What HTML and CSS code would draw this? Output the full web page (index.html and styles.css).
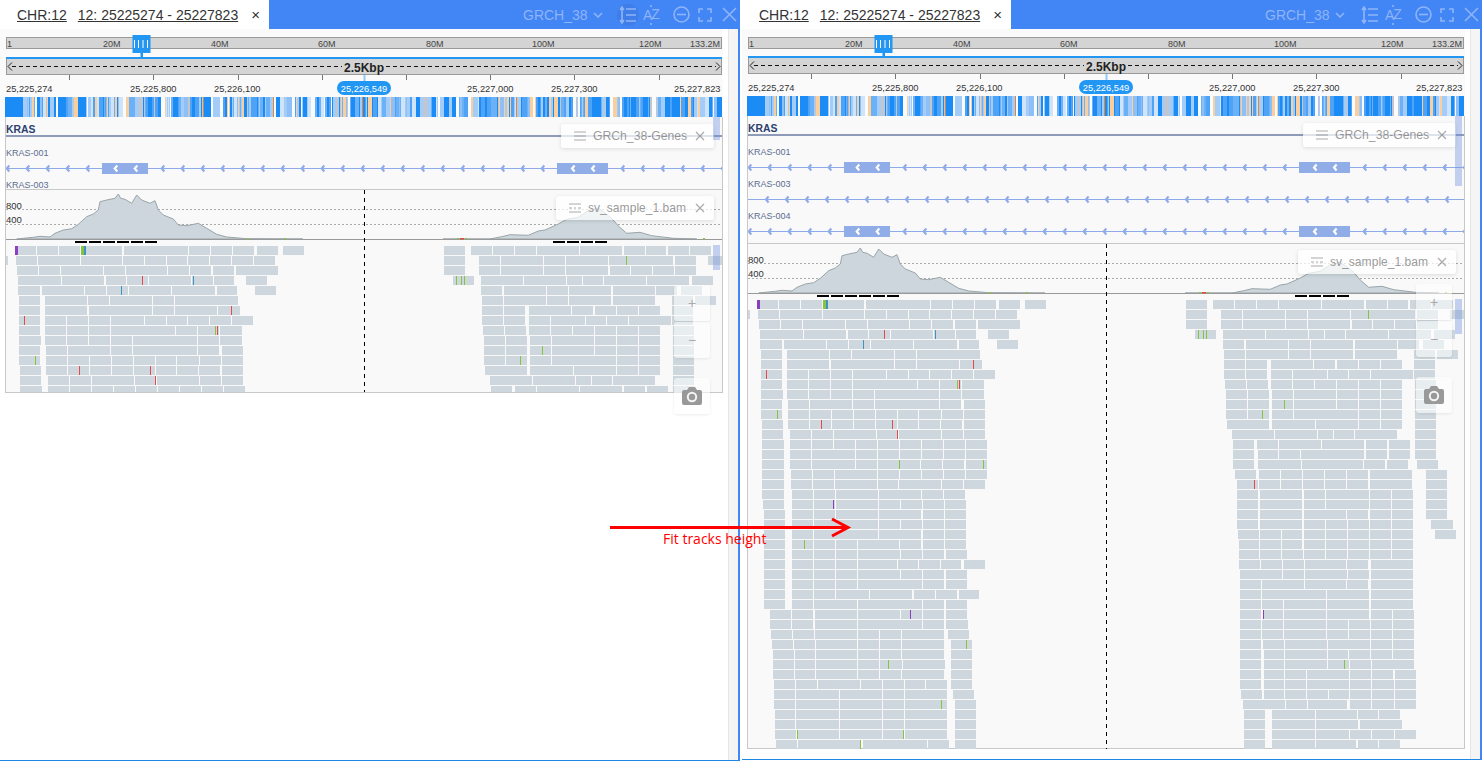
FILE: index.html
```html
<!DOCTYPE html>
<html lang="en">
<head>
    <meta charset="UTF-8">
    <title>Fit tracks height</title>
    <link rel="stylesheet" href="styles.css">
</head>
<body>
    <!-- browser before the track heights are fitted -->
    <div class="panel" id="panelBefore">
        <div class="header">
            <div class="tab">
                <a class="tab-link">CHR:12</a>
                <a class="tab-link">12: 25225274 - 25227823</a>
                <span class="tab-close">×</span>
            </div>
            <div class="tools">
                <span class="ref-name">GRCH_38</span>
                <svg class="tool-chevron" width="10" height="6"><path d="M1 1l4 4 4-4" /></svg>
                <span class="tool-round">
                    <svg width="18" height="18"><path d="M3 1v16M1 4l2-3 2 3M1 14l2 3 2-3M7 3h10M7 9h10M7 15h10" /></svg>
                </span>
                <span class="tool-az">A<i>Z</i><svg width="4" height="22"><path d="M2 1v2M2 19v2" /></svg></span>
                <svg class="tool-minus" width="17" height="17"><circle cx="8.5" cy="8.5" r="7.5" /><path d="M4 8.5h9" /></svg>
                <svg class="tool-full" width="14" height="14"><path d="M1 5V1h4M9 1h4v4M13 9v4H9M5 13H1V9" /></svg>
                <svg class="tool-x" width="15" height="15"><path d="M1 1l13 13M14 1L1 14" /></svg>
            </div>
        </div>
        <div class="main">
            <div class="view">
                <div class="top-area">
                    <svg class="ideogram"></svg>
                    <svg class="scale"></svg>
                    <svg class="seq"></svg>
                </div>
                <div class="tracks">
                    <svg class="genes"></svg>
                    <svg class="bam"></svg>
                </div>

                <div class="legend legend-genes">
                    <svg class="legend-icon" width="12" height="10"><path d="M0 1h12M0 5h12M0 9h12" /></svg>
                    <span>GRCh_38-Genes</span>
                    <svg class="legend-x" width="10" height="10"><path d="M1 1l8 8M9 1L1 9" /></svg>
                </div>
                <div class="legend legend-bam">
                    <svg class="legend-icon" width="12" height="10"><path d="M0 1h12M0 5h3M5 5h2M9 5h3M0 9h12" /></svg>
                    <span>sv_sample_1.bam</span>
                    <svg class="legend-x" width="10" height="10"><path d="M1 1l8 8M9 1L1 9" /></svg>
                </div>
                <div class="strip strip-genes"></div>
                <div class="strip strip-bam"></div>
                <div class="zoom-tools">
                    <div class="zoom-btn">+</div>
                    <div class="zoom-btn">−</div>
                    <div class="zoom-btn zoom-camera">
                        <svg width="20" height="18"><path d="M0 5q0-2 2-2h3l2-3h6l2 3h3q2 0 2 2v11q0 2-2 2H2q-2 0-2-2z" /><circle cx="10" cy="10" r="4.2" /></svg>
                    </div>
                </div>
            </div>
            <div class="scrollbar"></div>
        </div>
    </div>

    <!-- same browser after the click, all reads visible -->
    <div class="panel panel-fit" id="panelAfter">
        <div class="header">
            <div class="tab">
                <a class="tab-link">CHR:12</a>
                <a class="tab-link">12: 25225274 - 25227823</a>
                <span class="tab-close">×</span>
            </div>
            <div class="tools">
                <span class="ref-name">GRCH_38</span>
                <svg class="tool-chevron" width="10" height="6"><path d="M1 1l4 4 4-4" /></svg>
                <span class="tool-round tool-plain">
                    <svg width="18" height="18"><path d="M3 1v16M1 4l2-3 2 3M1 14l2 3 2-3M7 3h10M7 9h10M7 15h10" /></svg>
                </span>
                <span class="tool-az">A<i>Z</i><svg width="4" height="22"><path d="M2 1v2M2 19v2" /></svg></span>
                <svg class="tool-minus" width="17" height="17"><circle cx="8.5" cy="8.5" r="7.5" /><path d="M4 8.5h9" /></svg>
                <svg class="tool-full" width="14" height="14"><path d="M1 5V1h4M9 1h4v4M13 9v4H9M5 13H1V9" /></svg>
                <svg class="tool-x" width="15" height="15"><path d="M1 1l13 13M14 1L1 14" /></svg>
            </div>
        </div>
        <div class="main">
            <div class="view">
                <div class="top-area">
                    <svg class="ideogram"></svg>
                    <svg class="scale"></svg>
                    <svg class="seq"></svg>
                </div>
                <div class="tracks">
                    <svg class="genes"></svg>
                    <svg class="bam"></svg>
                </div>

                <div class="legend legend-genes">
                    <svg class="legend-icon" width="12" height="10"><path d="M0 1h12M0 5h12M0 9h12" /></svg>
                    <span>GRCh_38-Genes</span>
                    <svg class="legend-x" width="10" height="10"><path d="M1 1l8 8M9 1L1 9" /></svg>
                </div>
                <div class="legend legend-bam">
                    <svg class="legend-icon" width="12" height="10"><path d="M0 1h12M0 5h3M5 5h2M9 5h3M0 9h12" /></svg>
                    <span>sv_sample_1.bam</span>
                    <svg class="legend-x" width="10" height="10"><path d="M1 1l8 8M9 1L1 9" /></svg>
                </div>
                <div class="strip strip-genes"></div>
                <div class="strip strip-bam"></div>
                <div class="zoom-tools">
                    <div class="zoom-btn">+</div>
                    <div class="zoom-btn">−</div>
                    <div class="zoom-btn zoom-camera">
                        <svg width="20" height="18"><path d="M0 5q0-2 2-2h3l2-3h6l2 3h3q2 0 2 2v11q0 2-2 2H2q-2 0-2-2z" /><circle cx="10" cy="10" r="4.2" /></svg>
                    </div>
                </div>
            </div>
            <div class="scrollbar"></div>
        </div>
    </div>

    <!-- annotation on top of both panels -->
    <svg class="note-arrow" width="242" height="22"><path d="M0 11.5h236" /><path class="note-head" d="M222 3l16 8.5-16 8.5" /></svg>
    <span class="note-text">Fit tracks height</span>

    <script src="script.js"></script>
</body>
</html>
```

FILE: styles.css
```css
* {
    box-sizing: border-box;
}
body {
    margin: 0;
    width: 1482px;
    height: 761px;
    display: flex;
    gap: 2px;
    position: relative;
    overflow: hidden;
    background-color: #fff;
    font-family: "Liberation Sans", Arial, sans-serif;
}
.panel {
    width: 740px;
    height: 761px;
    display: flex;
    flex-direction: column;
    border-right: 2px solid #4285f4;
    border-bottom: 1px solid #1e88e5;
    background-color: #fff;
}
.panel-fit {
    height: 760px;
}

/* header bar */
.header {
    height: 29px;
    flex: none;
    display: flex;
    background-color: #4285f4;
}
.tab {
    width: 269px;
    flex: none;
    padding-left: 17px;
    display: flex;
    align-items: center;
    gap: 11px;
    background-color: #fff;
    color: #333;
    font-size: 14px;
    white-space: nowrap;
}
.tab-link {
    text-decoration: underline;
}
.tab-close {
    margin-left: 2px;
    font-size: 15px;
}
.tools {
    flex: 1;
    display: flex;
    align-items: center;
    padding-left: 254px;
    color: #8fb4f8;
}
.tools svg {
    fill: none;
    stroke: #8fb4f8;
    stroke-width: 1.6;
}
.ref-name {
    font-size: 14px;
    width: 70px;
}
.tool-round {
    width: 22px;
    height: 22px;
    margin-left: 14px;
    border-radius: 50%;
    background-color: #3f7de8;
    display: flex;
    align-items: center;
    justify-content: center;
}
.tool-plain {
    background-color: transparent;
}
.tool-az {
    position: relative;
    margin-left: 4px;
    width: 18px;
    font-size: 14px;
    letter-spacing: -1px;
}
.tool-az i {
    font-style: normal;
    position: relative;
    top: -1px;
}
.tool-az svg {
    position: absolute;
    left: 6px;
    top: -3px;
}
.tool-minus {
    margin-left: 12px;
}
.tool-full {
    margin-left: 8px;
}
.tool-x {
    margin-left: 10px;
}

/* main area */
.main {
    flex: 1;
    display: flex;
    min-height: 0;
}
.view {
    width: 728px;
    padding-left: 5px;
    position: relative;
}
.scrollbar {
    width: 10px;
    background-color: #f5f5f5;
    border-left: 1px solid #e6e6e6;
}
.top-area {
    width: 723px;
    margin-left: -5px;
    padding-left: 5px;
    padding-top: 4px;
    background-color: #fafafa;
}
.top-area svg,
.tracks svg {
    display: block;
}
.ideogram {
    width: 718px;
    height: 24px;
    overflow: visible;
}
.panel-fit .ideogram {
    height: 23px;
}
.scale {
    width: 718px;
    height: 40px;
}
.seq {
    width: 717px;
    height: 20px;
}
.tracks {
    width: 718px;
    height: 276px;
    border: 1px solid #c8c8c8;
    border-top: none;
    background-color: #f9f9f9;
}
.panel-fit .tracks {
    height: 633px;
}
.genes {
    width: 716px;
    height: 73px;
    border-bottom: 1px solid #c8c8c8;
}
.panel-fit .genes {
    height: 128px;
}
.bam {
    width: 716px;
    height: 202px;
}
.panel-fit .bam {
    height: 505px;
}

/* svg text */
.t-ideo {
    font-size: 9px;
    fill: #444;
}
.t-span {
    font-size: 12px;
    font-weight: bold;
    fill: #222;
}
.t-pos {
    font-size: 9.3px;
    fill: #333;
}
.t-pill {
    font-size: 9.3px;
    fill: #fff;
}
.t-gene {
    font-size: 10.4px;
    font-weight: bold;
    fill: #2d4170;
}
.t-trans {
    font-size: 9px;
    fill: #5c6d90;
}
.t-cov {
    font-size: 9.5px;
    fill: #333;
}

/* things lying over the tracks */
.legend {
    position: absolute;
    height: 24px;
    display: flex;
    align-items: center;
    border-radius: 3px;
    background-color: rgba(255, 255, 255, 0.72);
    box-shadow: 0 1px 4px rgba(0, 0, 0, 0.12);
    color: rgba(90, 90, 90, 0.62);
}
.legend svg {
    fill: none;
    stroke: rgba(90, 90, 90, 0.5);
    stroke-width: 1.2;
}
.legend-genes {
    left: 561px;
    top: 95px;
    width: 153px;
    padding-left: 13px;
    font-size: 12.2px;
}
.panel-fit .legend-genes {
    top: 94px;
}
.legend-bam {
    left: 556px;
    top: 167px;
    width: 158px;
    padding-left: 13px;
    font-size: 12.1px;
}
.panel-fit .legend-bam {
    top: 221px;
}
.legend-icon {
    margin-right: 7px;
}
.legend-x {
    position: absolute;
    right: 9px;
    top: 50%;
    margin-top: -5px;
}
.strip {
    position: absolute;
    left: 713px;
    width: 7px;
    background-color: rgba(120, 150, 225, 0.42);
}
.strip-genes {
    top: 88px;
    height: 23px;
}
.strip-bam {
    top: 216px;
    height: 25px;
}
.panel-fit .strip-genes {
    top: 87px;
    height: 70px;
}
.panel-fit .strip-bam {
    top: 270px;
    height: 35px;
}
.zoom-tools {
    position: absolute;
    left: 674px;
    top: 256px;
    width: 36px;
    display: flex;
    flex-direction: column;
    gap: 1px;
}
.panel-fit .zoom-tools {
    top: 255px;
}
.zoom-btn {
    height: 36px;
    display: flex;
    align-items: center;
    justify-content: center;
    border-radius: 3px;
    background-color: rgba(255, 255, 255, 0.55);
    box-shadow: 0 1px 3px rgba(0, 0, 0, 0.08);
    color: #aaa;
    font-size: 14px;
}
.zoom-camera {
    margin-top: 19px;
}
.zoom-camera path {
    fill: #999;
}
.zoom-camera circle {
    fill: none;
    stroke: #f4f4f4;
    stroke-width: 2;
}

/* red annotation */
.note-arrow {
    position: absolute;
    left: 610px;
    top: 516px;
    fill: none;
    stroke: #f00;
    stroke-width: 3;
}
.note-text {
    position: absolute;
    left: 663px;
    top: 529px;
    color: #f00;
    font-family: "Open Sans", sans-serif;
    font-size: 14px;
    line-height: 19px;
    white-space: nowrap;
}
```

FILE: script.js
```js
// Reads by row, x ranges in panel coordinates. First panel only shows the first 15 rows.
var READS = [
    "15-36 37-58 59-80 81-122 124-188 189-210 211-232 233-254 257-278 283-304 444-465 471-492 493-514 515-536 537-579 580-622 624-645 646-666 668-689 690-711",
    "6-8 16-37 38-80 81-122 123-144 145-166 167-187 188-209 210-231 232-253 254-275 444-465 479-500 501-543 544-565 566-608 609-673 675-696 708-722",
    "17-38 39-60 61-103 104-125 126-167 168-189 190-211 213-234 236-278 444-465 479-500 501-543 544-565 566-608 610-630 631-652 653-674 675-696",
    "18-61 62-104 106-126 127-148 149-191 192-213 214-234 246-267 453-474 481-523 524-566 567-582 583-603 604-646 647-689 692-713",
    "18-40 42-84 85-106 107-128 129-171 172-215 217-237 255-276 481-502 504-546 547-568 569-611 613-655 656-677 681-702",
    "19-40 45-87 88-109 110-152 153-174 175-238 482-503 504-546 547-568 569-611 613-655 672-693 695-716",
    "19-40 45-87 89-152 153-174 175-217 218-240 482-503 504-525 529-571 572-593 595-616 617-638 639-660 672-693",
    "19-40 45-66 67-88 89-110 111-144 145-166 167-187 188-209 210-231 232-253 482-503 504-525 529-550 551-585 586-606 607-628 629-671 672-693",
    "19-40 45-66 67-88 89-110 111-175 176-197 198-219 220-242 483-504 505-526 529-550 551-572 573-594 595-616 617-638 639-660 673-694",
    "19-41 45-66 67-88 89-110 111-132 133-197 198-219 220-242 484-505 506-527 530-551 552-594 595-616 617-638 639-660 673-694",
    "19-40 46-67 68-110 111-132 133-197 198-219 222-243 484-505 506-527 530-551 552-594 595-616 617-638 639-660 673-694",
    "19-40 46-67 68-89 90-111 112-133 134-155 156-176 177-199 200-221 222-243 484-505 506-527 530-551 552-616 617-638 639-660 673-694",
    "20-41 46-67 68-89 90-111 112-133 134-155 156-176 177-198 199-220 222-243 485-527 530-573 574-616 617-638 639-660 673-694",
    "20-41 48-69 70-91 92-134 135-156 157-199 200-221 222-243 490-532 533-575 576-591 592-612 613-655 673-694",
    "20-42 48-69 70-91 92-113 114-135 136-157 158-179 180-201 202-223 224-245 491-512 515-536 537-579 580-622 624-645 647-668 673-694",
    "20-42 48-69 70-113 114-135 136-157 158-179 180-201 202-223 224-245 491-512 516-536 537-558 559-622 624-645 647-668 673-694",
    "20-42 48-69 70-113 114-135 136-178 179-200 201-222 224-245 491-512 516-559 560-621 622-643 645-666 675-696",
    "20-42 49-70 71-92 93-135 136-157 158-179 180-201 202-223 224-245 493-514 517-538 539-560 561-582 583-604 605-626 628-670 684-705",
    "20-42 49-70 71-92 93-135 136-156 157-199 200-221 222-243 495-516 517-538 539-560 561-582 583-604 605-626 628-670 684-705",
    "20-42 50-71 72-93 94-136 137-179 180-201 202-223 495-516 518-560 562-583 584-627 628-649 650-671 684-705",
    "21-42 50-71 72-93 94-136 137-158 159-180 181-202 203-224 495-516 518-560 562-583 584-627 628-649 650-671 684-705",
    "22-43 50-71 72-93 94-136 137-179 181-202 203-224 495-516 518-560 562-604 605-626 628-649 650-671 684-705",
    "22-43 50-71 72-136 137-158 159-180 181-202 203-224 495-516 518-560 562-583 584-605 606-627 628-649 650-671 689-711",
    "22-43 50-71 72-136 137-179 181-202 203-224 496-517 518-539 540-560 562-583 584-605 606-627 628-649 650-671 693-714",
    "22-43 50-71 72-93 94-115 116-157 158-179 181-202 203-224 497-517 518-539 540-560 562-583 584-605 606-627 628-649 650-671",
    "22-43 50-71 72-93 94-115 116-158 159-180 181-202 204-225 497-517 518-539 540-561 562-583 584-605 606-627 628-649 650-671",
    "22-43 50-71 72-93 94-115 116-155 156-176 177-198 199-219 222-243 497-518 519-540 541-562 563-604 605-626 629-671",
    "22-43 50-71 72-93 94-115 116-158 159-180 181-202 204-225 498-540 541-562 563-605 606-627 629-671",
    "22-43 50-71 72-93 94-115 116-180 181-202 204-225 498-519 520-562 563-604 605-626 629-671",
    "22-43 50-71 72-93 94-127 128-170 172-193 194-215 217-237 498-519 520-584 585-627 629-671",
    "22-43 50-71 72-115 116-180 181-202 204-225 498-519 520-541 542-584 585-627 629-671",
    "28-49 50-71 73-115 116-158 159-180 181-202 204-225 498-519 521-541 542-584 585-627 629-650 651-672",
    "28-49 50-71 73-115 116-180 181-202 204-226 498-519 520-541 542-584 585-606 607-628 629-650 651-672",
    "29-50 51-72 73-115 116-137 138-159 160-202 206-227 498-519 520-541 542-584 585-606 607-628 629-650 651-672",
    "30-51 52-73 74-115 116-137 138-159 160-202 209-230 498-519 521-542 543-585 586-628 629-650 651-672",
    "31-52 53-73 74-115 116-137 138-159 160-202 209-230 498-519 522-542 543-585 586-606 607-628 629-650 651-672",
    "31-52 53-73 74-115 116-137 138-160 161-203 209-230 498-519 522-542 543-585 586-607 608-629 630-672",
    "31-52 53-73 74-115 116-137 138-159 160-202 209-230 498-519 522-542 543-564 565-607 608-629 630-651 653-674",
    "32-53 54-75 76-118 119-140 141-162 163-183 184-205 209-230 498-519 522-542 543-564 565-607 608-629 630-652 653-674",
    "32-53 54-97 98-140 141-162 163-205 211-232 499-520 522-542 543-564 565-586 587-607 608-629 630-652 653-674",
    "32-53 54-97 98-140 141-162 163-205 213-234 501-543 544-565 566-605 608-629 630-652 653-674",
    "33-53 54-97 98-140 141-162 163-205 213-234 502-523 530-573 574-615 616-636 637-658",
    "33-53 54-97 98-140 141-162 163-205 213-234 502-523 530-573 574-616 618-660",
    "33-54 55-97 98-140 141-162 163-205 213-234 502-523 530-573 574-607 608-629 630-652 653-674",
    "34-55 56-118 121-185 186-207 213-234 502-523 530-573 574-614 616-636 637-658"
];

var RED = "#e34a4a", GREEN = "#85c441", BLUE = "#3f93c1", PURPLE = "#8a3fc0", DARK = "#56606a";

// row, x, colour of the mismatches
var MARKS = [
    [0, 15, PURPLE, 3], [0, 81, GREEN, 3], [0, 84, BLUE, 2], [1, 626, GREEN], [3, 142, RED], [3, 193, BLUE],
    [3, 456, GREEN], [3, 461, GREEN], [3, 464, GREEN], [4, 121, BLUE], [6, 231, RED], [7, 24, RED],
    [8, 215, GREEN], [8, 217, RED], [10, 542, GREEN], [11, 35, GREEN], [11, 520, GREEN], [12, 79, RED],
    [12, 150, RED], [13, 155, RED], [16, 157, GREEN], [16, 241, GREEN], [18, 512, RED], [20, 91, PURPLE],
    [24, 62, GREEN], [31, 168, PURPLE], [31, 521, PURPLE], [34, 224, GREEN], [36, 146, GREEN], [36, 602, GREEN],
    [40, 199, GREEN], [43, 55, GREEN], [43, 161, GREEN], [44, 118, GREEN]
];

var COVER_LEFT = [
    [16.7, 49], [33.3, 47.3], [40, 46.3], [50, 47], [55, 43.3], [63.3, 40], [71.7, 38.7], [78.3, 34.3], [86.7, 26.7],
    [93.3, 24], [98.3, 20], [100, 11.7], [106.7, 10], [115, 8.3], [118.3, 4], [120.7, 8.3], [125, 9.3], [131.7, 13.3],
    [136.7, 5], [141.7, 10], [150, 13.3], [155, 10.7], [158.3, 20], [163.3, 25], [173.3, 29], [178.3, 35], [186.7, 35.7],
    [198.3, 33.3], [206.7, 38.3], [216.7, 44.3], [226.7, 47], [246.7, 48.7], [303, 49]
];
var COVER_RIGHT = [
    [443, 49], [490, 49], [501.7, 46.7], [510, 44.7], [528.3, 45.3], [538.3, 41], [545, 40], [558.3, 34], [566.7, 29.3],
    [578.3, 27.3], [586.7, 21.7], [595, 19], [598, 18], [603.3, 21.7], [611.7, 28.3], [618.3, 36], [626.7, 43.3],
    [640, 42.3], [651.7, 45.7], [673.3, 48.3], [696.7, 49]
];

function drawIdeogram(svg) {
    var labels = [[7, "1"], [103, "20M"], [211, "40M"], [318, "60M"], [426, "80M"], [532, "100M"], [639, "120M"], [690, "133.2M"]];
    var s = '<g transform="translate(-5 -33)">';
    s += '<rect x="6.5" y="37.5" width="715" height="11" fill="#d4d4d4" stroke="#999"/>';
    labels.forEach(function (l) {
        s += '<text class="t-ideo" x="' + l[0] + '" y="47">' + l[1] + '</text>';
    });
    s += '<rect x="132.5" y="35" width="18" height="18" fill="#2196f3"/>';
    s += '<rect x="140.5" y="53" width="2.5" height="4" fill="#2196f3"/>';
    [134, 138, 142.5, 147].forEach(function (x) {
        s += '<rect x="' + x + '" y="40" width="1" height="8" fill="#fff"/>';
    });
    svg.innerHTML = s + '</g>';
}

function drawScale(svg) {
    var s = '<g transform="translate(-5 0)">';
    s += '<rect x="6" y="0" width="716" height="2" fill="#2196f3"/>';
    s += '<rect x="6" y="2" width="716" height="16" fill="#d4d4d4"/>';
    s += '<rect x="6" y="17" width="716" height="1" fill="#999"/>';
    s += '<rect x="6" y="2" width="1" height="16" fill="#999"/><rect x="721" y="2" width="1" height="16" fill="#999"/>';
    s += '<path d="M12 9.5H342M386 9.5H716" stroke="#111" stroke-dasharray="4 3"/>';
    s += '<path d="M12 5.5L8 9.5l4 4M716 5.5l4 4-4 4" fill="none" stroke="#222"/>';
    s += '<text class="t-span" x="364" y="15" text-anchor="middle">2.5Kbp</text>';
    [69.5, 153.5, 238.5, 322.5, 406.5, 490.5, 574.5, 659.5].forEach(function (x) {
        s += '<path d="M' + x + ' 18v5" stroke="#777"/>';
    });
    s += '<path d="M364.5 18v6" stroke="#90caf9" stroke-width="2"/>';
    [[6, "25,225,274"], [130, "25,225,800"], [214, "25,226,100"], [467, "25,227,000"], [551, "25,227,300"], [674, "25,227,823"]].forEach(function (l) {
        s += '<text class="t-pos" x="' + l[0] + '" y="35">' + l[1] + '</text>';
    });
    s += '<rect x="337" y="24" width="54" height="14" rx="7" fill="#2196f3"/>';
    s += '<text class="t-pill" x="364" y="35" text-anchor="middle">25,226,549</text>';
    svg.innerHTML = s + '</g>';
}

// reference bases, seeded so both panels get the same strip
function drawSeq(svg) {
    var colors = ["#1b8bf6", "#1b8bf6", "#1b8bf6", "#1b8bf6", "#4fa3f6", "#4fa3f6", "#6bb1f7", "#6bb1f7", "#a3cdf8", "#a3cdf8", "#a3cdf8", "#cfe3f9", "#f9fbfe", "#f9cfa0", "#c3c6cc", "#8fc0f5"];
    var seed = 48271;
    var x = 18;
    var s = '<rect width="18" height="20" fill="#1b8bf6"/>';
    while (x < 717) {
        seed ^= seed << 13;
        seed ^= seed >>> 17;
        seed ^= seed << 5;
        var c = colors[(seed >>> 4) & 15];
        var w = [1, 1, 1, 2, 2, 3, 1, 4][(seed >>> 12) & 7];
        if (((seed >>> 20) & 31) === 0) {
            c = "#e3862d";
            w = 1;
        }
        if (x > 488 && x < 506 && ((seed >>> 26) & 1)) c = "#f9cfa0";
        s += '<rect x="' + x + '" width="' + w + '" height="20" fill="' + c + '"/>';
        x += w;
    }
    svg.innerHTML = '<g shape-rendering="crispEdges">' + s + '</g>';
}

function chevron(x, y, color) {
    return '<path d="M' + (x + 2.6) + ' ' + (y - 3) + 'L' + x + ' ' + y + 'l2.6 3" fill="none" stroke="' + color + '" stroke-width="2.1"/>';
}

function transcript(name, textY, lineY, hasExons) {
    var s = '<text class="t-trans" x="6" y="' + textY + '">' + name + '</text>';
    s += '<path d="M6 ' + (lineY + 0.5) + 'H722" stroke="#8faae8"/>';
    var x;
    if (hasExons) {
        [6.7, 26.7, 46.7, 66.7, 86.7].forEach(function (v) {
            s += chevron(v, lineY + 0.5, "#8faae8");
        });
        for (x = 161.7; x < 725; x += 20) {
            if (x > 550 && x < 610) continue;
            s += chevron(x, lineY + 0.5, "#8faae8");
        }
        s += '<rect x="102" y="' + (lineY - 5) + '" width="46" height="11" fill="#90ade8"/>';
        s += '<rect x="557" y="' + (lineY - 5) + '" width="51" height="11" fill="#90ade8"/>';
        [114.7, 134.7, 572, 592].forEach(function (v) {
            s += chevron(v, lineY + 0.5, "#fff");
        });
    } else {
        for (x = 24; x < 710; x += 20) {
            s += chevron(x, lineY + 0.5, "#8faae8");
        }
    }
    return s;
}

function drawGenes(svg, fit) {
    var s = '<g transform="translate(-6 0)">';
    s += '<text class="t-gene" x="6" y="16">KRAS</text>';
    s += '<path d="M6 19H722" stroke="#8e9bb8" stroke-width="2"/>';
    s += transcript("KRAS-001", 39, 51, true);
    if (fit) {
        s += transcript("KRAS-003", 71, 83, false);
        s += transcript("KRAS-004", 103, 115, true);
    } else {
        s += '<text class="t-trans" x="6" y="71">KRAS-003</text>';
    }
    svg.innerHTML = s + '</g>';
}

function polyline(points) {
    return points.map(function (p) { return p[0] + ',' + p[1]; }).join(' ');
}

function drawBam(svg, rowCount, height) {
    var s = '<g transform="translate(-6 0)">';
    s += '<path d="M6 19.5H722M6 34.5H722" stroke="#aaa" stroke-dasharray="2 2"/>';
    [COVER_LEFT, COVER_RIGHT].forEach(function (c) {
        s += '<polygon points="' + polyline(c) + '" fill="#ccd6dc" stroke="#9aa5a9"/>';
    });
    s += '<path d="M6 49.5H722" stroke="#999"/>';
    s += '<text class="t-cov" x="6" y="19">800</text><text class="t-cov" x="6" y="33">400</text>';
    [[247, GREEN], [284, GREEN], [457, GREEN], [460, RED], [462, RED], [465, GREEN], [703, GREEN]].forEach(function (m) {
        s += '<rect x="' + m[0] + '" y="48" width="2" height="1.5" fill="' + m[1] + '"/>';
    });
    [75, 89, 103, 117, 131, 145, 553, 567, 581, 595].forEach(function (x) {
        s += '<rect x="' + x + '" y="51" width="12" height="2"/>';
    });

    s += '<g shape-rendering="crispEdges">';
    READS.slice(0, rowCount).forEach(function (row, i) {
        row.split(' ').forEach(function (r) {
            var a = r.split('-');
            s += '<rect x="' + a[0] + '" y="' + (56 + i * 10) + '" width="' + (a[1] - a[0]) + '" height="9" fill="#cdd7dd"/>';
        });
    });
    MARKS.forEach(function (m) {
        if (m[0] < rowCount) {
            s += '<rect x="' + m[1] + '" y="' + (56 + m[0] * 10) + '" width="' + (m[3] || 1) + '" height="9" fill="' + m[2] + '"/>';
        }
    });
    s += '</g>';
    s += '<path d="M364.5 0V' + height + '" stroke="#000" stroke-dasharray="4 4"/>';
    svg.innerHTML = s + '</g>';
}

function drawPanel(panel, fit) {
    drawIdeogram(panel.querySelector('.ideogram'));
    drawScale(panel.querySelector('.scale'));
    drawSeq(panel.querySelector('.seq'));
    drawGenes(panel.querySelector('.genes'), fit);
    drawBam(panel.querySelector('.bam'), fit ? READS.length : 15, fit ? 505 : 202);
}

drawPanel(document.getElementById('panelBefore'), false);
drawPanel(document.getElementById('panelAfter'), true);
```
